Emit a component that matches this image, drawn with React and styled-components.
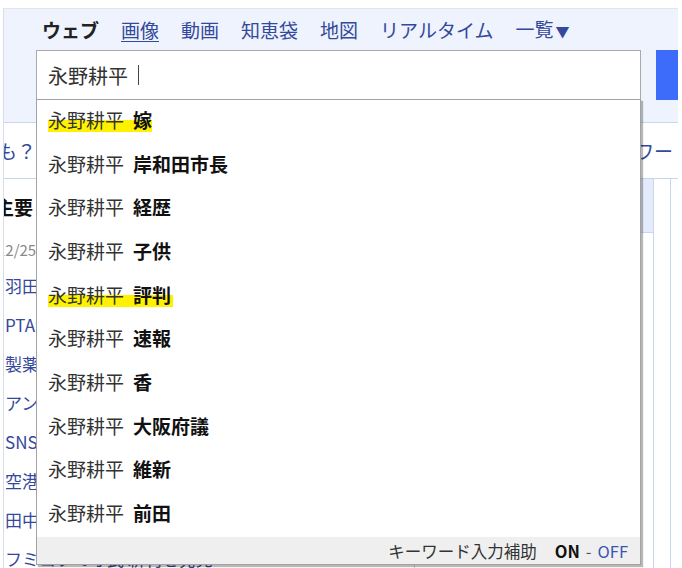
import React from 'react';
import styled, { createGlobalStyle } from 'styled-components';

const GlobalStyle = createGlobalStyle`
  html, body {
    margin: 0;
    padding: 0;
    background: #fff;
  }
  body {
    font-family: "Noto Sans CJK JP", "Noto Sans", sans-serif;
    color: #333;
  }
`;

const Page = styled.div`
  width: 682px;
  height: 568px;
  padding: 8px 0 0 3px;
  box-sizing: border-box;
  overflow: hidden;
`;

const Panel = styled.div`
  width: 675px;
  height: 560px;
  box-sizing: border-box;
  border-top: 1px solid #e1e5ec;
  border-left: 1px solid #d8dee8;
  overflow: hidden;
  display: flex;
  flex-direction: column;
`;

const Header = styled.div`
  height: 114px;
  flex: none;
  box-sizing: border-box;
  background: #eef3fd;
  border-bottom: 1px solid #c8d5f0;
  padding: 8px 0 0 32px;
`;

const Tabs = styled.nav`
  display: flex;
  align-items: center;
  gap: 22px;
  height: 26px;
  padding-left: 6px;
  font-size: 19px;
  line-height: 26px;
  white-space: nowrap;
`;

const Tab = styled.a`
  color: ${p => (p.$current ? '#222' : '#33499c')};
  font-weight: ${p => (p.$current ? 700 : 400)};
  text-decoration: ${p => (p.$underline ? 'underline' : 'none')};
  text-underline-offset: 3px;
`;

const Arrow = styled.span`
  font-size: 14px;
  margin-left: 2px;
`;

const SearchRow = styled.div`
  display: flex;
  align-items: flex-start;
  gap: 15px;
  margin-top: 7px;
`;

const SearchBox = styled.div`
  position: relative;
  flex: none;
  width: 605px;
  height: 50px;
  box-sizing: border-box;
  border: 1px solid #a9a9a9;
  background: #fff;
  display: flex;
  align-items: center;
  padding-left: 11px;
  font-size: 20px;
  color: #333;
`;

const Cursor = styled.span`
  display: inline-block;
  width: 1px;
  height: 20px;
  background: #444;
  margin-left: 10px;
`;

const SearchButton = styled.button`
  flex: none;
  width: 90px;
  height: 50px;
  border: none;
  background: #3e6cfa;
`;

const Dropdown = styled.div`
  position: absolute;
  z-index: 10;
  top: 48px;
  left: -1px;
  width: 605px;
  height: 466px;
  box-sizing: border-box;
  border: 1px solid #a2a2a2;
  box-shadow: 2px 2px 1px rgba(0, 0, 0, 0.28);
  background: #fff;
  display: flex;
  flex-direction: column;
`;

const Suggestion = styled.div`
  height: 43.7px;
  box-sizing: border-box;
  display: flex;
  align-items: center;
  padding: 0 11px 5px;
  font-size: 19px;
  white-space: nowrap;
`;

const Marked = styled.span`
  padding-right: ${p => p.$tail || 0}px;
  background: ${p =>
    p.$on
      ? 'linear-gradient(to bottom, transparent 52%, #fff200 52%, #fff200 96%, transparent 96%)'
      : 'none'};
`;

const Base = styled.span`
  color: #333;
`;

const Extra = styled.b`
  color: #111;
  font-weight: 700;
  margin-left: 9px;
`;

const Footer = styled.div`
  height: 27px;
  margin-top: auto;
  background: #efefef;
  display: flex;
  align-items: center;
  justify-content: flex-end;
  padding-right: 12px;
  font-size: 16.5px;
  color: #333;
  white-space: nowrap;
`;

const Toggle = styled.span`
  margin-left: ${p => (p.$on ? 18 : 0)}px;
  color: ${p => (p.$on ? '#111' : '#3a55b0')};
  font-weight: ${p => (p.$on ? 700 : 400)};
`;

const Dash = styled.span`
  margin: 0 6px;
  color: #555;
`;

const SubRow = styled.div`
  height: 56px;
  flex: none;
  box-sizing: border-box;
  border-bottom: 1px solid #c8d5f0;
  display: flex;
  align-items: center;
  justify-content: space-between;
  font-size: 19px;
  color: #33499c;
  white-space: nowrap;
`;

const Hint = styled.div`
  width: 32px;
  overflow: hidden;
  display: flex;
  justify-content: flex-end;
`;

const Related = styled.span`
  margin-right: -14px;
`;

const Body = styled.div`
  flex: 1;
  display: grid;
  grid-template-columns: 1fr 240px 8px;
  column-gap: 16px;
  min-height: 0;
`;

const News = styled.div`
  overflow: hidden;
  white-space: nowrap;
`;

const NewsTitle = styled.div`
  height: 56px;
  line-height: 56px;
  margin-left: -9px;
  font-size: 19px;
  font-weight: 700;
  color: #111;
`;

const Updated = styled.div`
  height: 20px;
  line-height: 20px;
  margin: 5px 0 0 -7px;
  font-size: 15px;
  color: #888;
`;

const NewsList = styled.ul`
  list-style: none;
  margin: 6px 0 0;
  padding: 0 0 0 1px;
`;

const NewsItem = styled.li`
  height: 39px;
  line-height: 39px;
  font-size: 17px;
  color: #33499c;
`;

const SideBox = styled.div`
  border-left: 1px solid #c9d6f1;
  border-right: 1px solid #c9d6f1;
`;

const SideHead = styled.div`
  height: 54px;
  box-sizing: border-box;
  background: #e4ebfb;
  border-bottom: 1px solid #c9d6f1;
`;

const SideEdge = styled.div`
  border-left: 1px solid #c9d6f1;
`;

const base = '永野耕平';
const suggestions = [
  { word: '嫁', mark: true, tail: 0 },
  { word: '岸和田市長' },
  { word: '経歴' },
  { word: '子供' },
  { word: '評判', mark: true, tail: 2 },
  { word: '速報' },
  { word: '香' },
  { word: '大阪府議' },
  { word: '維新' },
  { word: '前田' },
];

const news = [
  '羽田空港で機材トラブル 欠航相次ぐ',
  'PTA会費の徴収 見直しの動き広がる',
  '製薬会社に業務停止命令へ',
  'アンケートで判明 若者の意識',
  'SNS投稿巡り 男性を書類送検',
  '空港アクセス線 計画が正式決定',
  '田中将大 移籍後の初登板へ',
  'フミコフミオ氏 新刊を発売',
];

export default function App() {
  return (
    <>
      <GlobalStyle />
      <Page>
        <Panel>
          <Header>
            <Tabs>
              <Tab $current>ウェブ</Tab>
              <Tab $underline>画像</Tab>
              <Tab>動画</Tab>
              <Tab>知恵袋</Tab>
              <Tab>地図</Tab>
              <Tab>リアルタイム</Tab>
              <Tab>一覧<Arrow>▼</Arrow></Tab>
            </Tabs>
            <SearchRow>
              <SearchBox>
                {base}
                <Cursor />
                <Dropdown>
                  {suggestions.map(s => (
                    <Suggestion key={s.word}>
                      <Marked $on={s.mark} $tail={s.tail}>
                        <Base>{base}</Base>
                        <Extra>{s.word}</Extra>
                      </Marked>
                    </Suggestion>
                  ))}
                  <Footer>
                    キーワード入力補助
                    <Toggle $on>ON</Toggle>
                    <Dash>-</Dash>
                    <Toggle>OFF</Toggle>
                  </Footer>
                </Dropdown>
              </SearchBox>
              <SearchButton aria-label="検索" />
            </SearchRow>
          </Header>
          <SubRow>
            <Hint>
              <span>こちらのキーワードも？</span>
            </Hint>
            <Related>関連キーワード</Related>
          </SubRow>
          <Body>
            <News>
              <NewsTitle>主要</NewsTitle>
              <Updated>12/25(火) 18時更新</Updated>
              <NewsList>
                {news.map(n => (
                  <NewsItem key={n}>{n}</NewsItem>
                ))}
              </NewsList>
            </News>
            <SideBox>
              <SideHead />
            </SideBox>
            <SideEdge />
          </Body>
        </Panel>
      </Page>
    </>
  );
}
